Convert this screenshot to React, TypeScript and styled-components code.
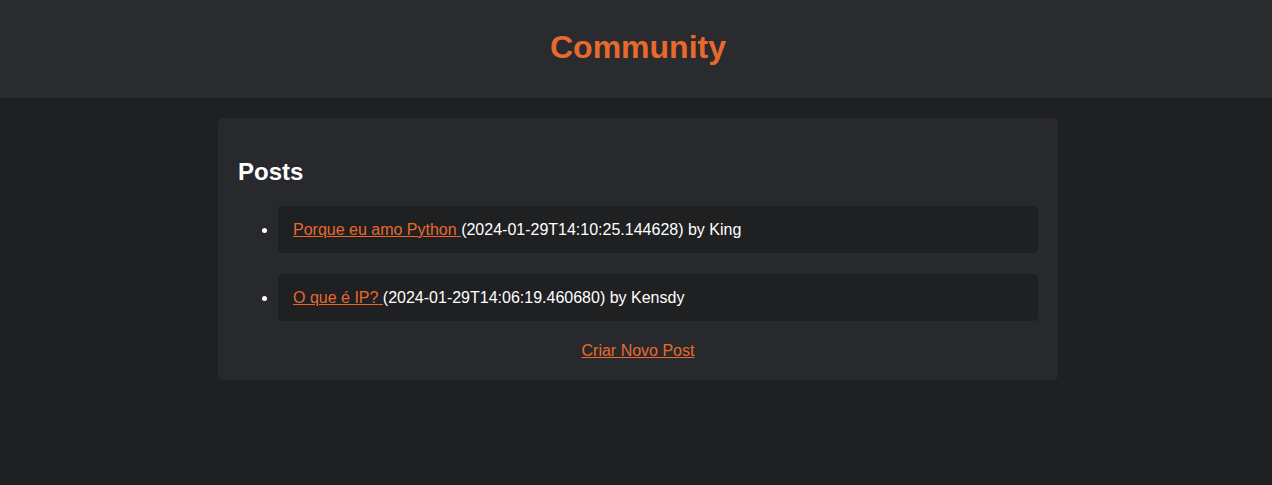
import React from "react";
import styled, { createGlobalStyle } from "styled-components";

const Global = createGlobalStyle`
  html, body { margin: 0; padding: 0; }
  body {
    background: #1f2022;
    color: #ffffff;
    font-family: "Liberation Sans", Arial, sans-serif;
    padding-left: 4px;
  }
`;

const Header = styled.header`
  background: #2a2b2f;
  height: 98px;
  margin-left: -4px;
  padding-left: 4px;
  padding-bottom: 4px;
  box-sizing: border-box;
  display: flex;
  align-items: center;
  justify-content: center;
`;

const Title = styled.h1`
  margin: 0;
  color: #e8692e;
  font-size: 32px;
  font-weight: bold;
  line-height: 37px;
`;

const Container = styled.main`
  width: 800px;
  margin: 20px auto 0;
  padding: 20px;
  background: #28292d;
  border-radius: 5px;
`;

const Heading = styled.h2`
  margin: 20px 0 20px;
  font-size: 24px;
  line-height: 28px;
  font-weight: bold;
`;

const List = styled.ul`
  margin: 0;
  padding-left: 40px;
`;

const Item = styled.li`
  background: #1f2022;
  border-radius: 4px;
  padding: 14px 15px;
  margin-bottom: 21px;
  font-size: 16px;
  line-height: 19px;
`;

const Link = styled.a`
  color: #e8692e;
  text-decoration: underline;
`;

const Footer = styled.div`
  text-align: center;
  font-size: 16px;
  line-height: 18px;
`;

const posts = [
  { title: "Porque eu amo Python", date: "2024-01-29T14:10:25.144628", author: "King" },
  { title: "O que é IP?", date: "2024-01-29T14:06:19.460680", author: "Kensdy" },
];

export default function App() {
  return (
    <>
      <Global />
      <Header>
        <Title>Community</Title>
      </Header>
      <Container>
        <Heading>Posts</Heading>
        <List>
          {posts.map((p) => (
            <Item key={p.title}>
              <Link href="#">{p.title} </Link>({p.date}) by {p.author}
            </Item>
          ))}
        </List>
        <Footer>
          <Link href="#">Criar Novo Post</Link>
        </Footer>
      </Container>
    </>
  );
}
